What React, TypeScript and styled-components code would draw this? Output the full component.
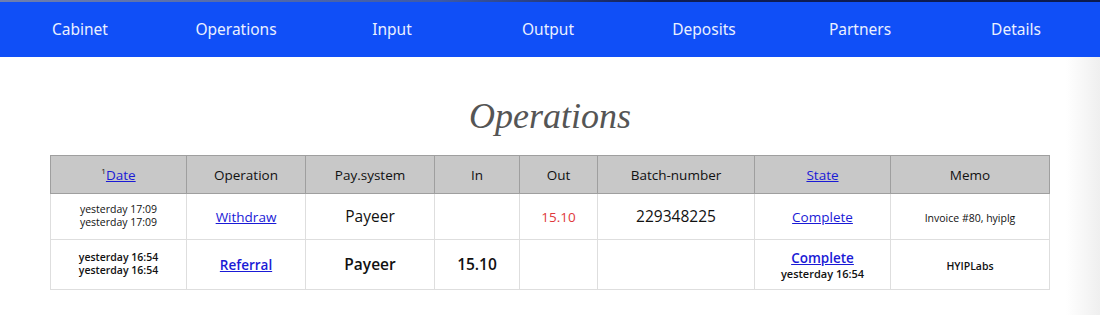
import React from 'react';
import styled, { createGlobalStyle } from 'styled-components';

const GlobalStyle = createGlobalStyle`
  html, body {
    margin: 0;
    padding: 0;
    background: #ffffff;
  }
  body {
    font-family: "Open Sans", "Noto Sans", sans-serif;
  }
`;

type Row = {
  date: string;
  operation: string;
  system: string;
  inAmount?: string;
  outAmount?: string;
  batch?: string;
  stateNote?: string;
  memo: string;
  bold?: boolean;
};

const rows: Row[] = [
  {
    date: 'yesterday 17:09',
    operation: 'Withdraw',
    system: 'Payeer',
    outAmount: '15.10',
    batch: '229348225',
    memo: 'Invoice #80, hyiplg',
  },
  {
    date: 'yesterday 16:54',
    operation: 'Referral',
    system: 'Payeer',
    inAmount: '15.10',
    stateNote: 'yesterday 16:54',
    memo: 'HYIPLabs',
    bold: true,
  },
];

const navItems = ['Cabinet', 'Operations', 'Input', 'Output', 'Deposits', 'Partners', 'Details'];

const App = () => {
  return (
    <Page>
      <GlobalStyle />
      <TopLine />
      <NavBar>
        {navItems.map((item) => (
          <NavItem key={item}>{item}</NavItem>
        ))}
      </NavBar>
      <Content>
        <Title>Operations</Title>
        <Table>
          <colgroup>
            <col style={{ width: 136 }} />
            <col style={{ width: 119 }} />
            <col style={{ width: 129 }} />
            <col style={{ width: 85 }} />
            <col style={{ width: 78 }} />
            <col style={{ width: 157 }} />
            <col style={{ width: 136 }} />
            <col style={{ width: 159 }} />
          </colgroup>
          <thead>
            <tr>
              <HeadCell>
                <Sup>1</Sup>
                <Link href="#">Date</Link>
              </HeadCell>
              <HeadCell>Operation</HeadCell>
              <HeadCell>Pay.system</HeadCell>
              <HeadCell>In</HeadCell>
              <HeadCell>Out</HeadCell>
              <HeadCell>Batch-number</HeadCell>
              <HeadCell>
                <Link href="#">State</Link>
              </HeadCell>
              <HeadCell>Memo</HeadCell>
            </tr>
          </thead>
          <tbody>
            {rows.map((row, i) => (
              <BodyRow key={i} $bold={row.bold}>
                <Cell>
                  <SmallText>
                    {row.date}
                    <br />
                    {row.date}
                  </SmallText>
                </Cell>
                <Cell>
                  <Link href="#">{row.operation}</Link>
                </Cell>
                <Cell>
                  <BigText>{row.system}</BigText>
                </Cell>
                <Cell>{row.inAmount && <BigText>{row.inAmount}</BigText>}</Cell>
                <Cell>{row.outAmount && <OutAmount>{row.outAmount}</OutAmount>}</Cell>
                <Cell>{row.batch && <BigText>{row.batch}</BigText>}</Cell>
                <Cell>
                  <Link href="#">Complete</Link>
                  {row.stateNote && <StateNote>{row.stateNote}</StateNote>}
                </Cell>
                <Cell>
                  <SmallText>{row.memo}</SmallText>
                </Cell>
              </BodyRow>
            ))}
          </tbody>
        </Table>
      </Content>
    </Page>
  );
};

export default App;

const Page = styled.div`
  width: 1100px;
  height: 315px;
  overflow: hidden;
  background: linear-gradient(to right, #ffffff 0px, #ffffff 1066px, #efefef 1100px);
`;

const TopLine = styled.div`
  height: 2px;
  background: linear-gradient(to right, #6f7fae 0%, #3d5aa8 40%, #0f1d55 60%, #0b1a4f 100%);
`;

const NavBar = styled.nav`
  display: grid;
  grid-template-columns: repeat(7, 156px);
  padding-left: 2px;
  height: 55px;
  background: #104ff7;
`;

const NavItem = styled.div`
  display: flex;
  align-items: center;
  justify-content: center;
  color: #eaf0ff;
  font-family: "Noto Sans", "Open Sans", sans-serif;
  font-size: 15.5px;
  padding-bottom: 2px;
`;

const Content = styled.main`
  display: flex;
  flex-direction: column;
  align-items: center;
  padding-top: 36px;
`;

const Title = styled.h1`
  margin: 0 0 16px;
  font-family: "Liberation Serif", serif;
  font-style: italic;
  font-weight: normal;
  font-size: 36px;
  line-height: 46px;
  color: #555555;
`;

const Table = styled.table`
  width: 999px;
  table-layout: fixed;
  border-collapse: collapse;
  text-align: center;
  color: #111111;
`;

const HeadCell = styled.th`
  height: 37px;
  padding: 0;
  background: #c8c8c8;
  border: 1px solid #9f9f9f;
  font-size: 13.5px;
  font-weight: normal;
  color: #111111;
`;

const Sup = styled.sup`
  font-size: 8px;
  vertical-align: 6px;
  line-height: 0;
`;

const Link = styled.a`
  color: #1a1ad6;
  text-decoration: underline;
  font-size: 13.5px;
`;

const BodyRow = styled.tr<{ $bold?: boolean }>`
  height: ${(p) => (p.$bold ? '50px' : '46px')};
  font-weight: ${(p) => (p.$bold ? 600 : 'normal')};
`;

const Cell = styled.td`
  padding: 0 4px;
  border: 1px solid #dedede;
  line-height: 1.1;
`;

const SmallText = styled.span`
  display: inline-block;
  font-size: 10.5px;
  line-height: 13px;
`;

const BigText = styled.span`
  font-size: 15.5px;
`;

const OutAmount = styled.span`
  font-size: 13.5px;
  color: #e0393b;
`;

const StateNote = styled.div`
  font-size: 11px;
  line-height: 13px;
`;
